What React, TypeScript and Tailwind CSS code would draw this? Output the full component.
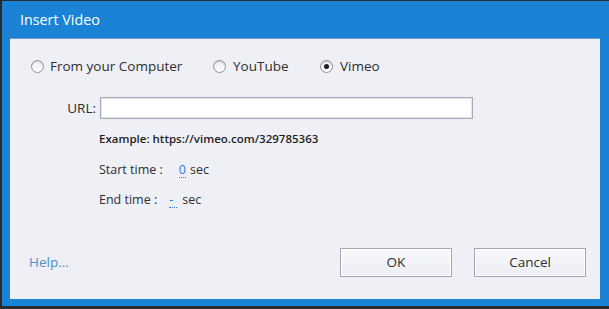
import React from "react";

function Radio({ checked }: { checked?: boolean }) {
  return (
    <span className="relative flex h-[13px] w-[13px] shrink-0 items-center justify-center rounded-full border border-[#8e9096] bg-gradient-to-b from-[#e9eaee] to-white shadow-[inset_0_1px_1px_rgba(0,0,0,0.12)]">
      {checked && <span className="h-[5px] w-[5px] rounded-full bg-[#1e1e1e]" />}
    </span>
  );
}

export default function App() {
  const font = { fontFamily: '"Open Sans", "Noto Sans", "Liberation Sans", sans-serif' };
  return (
    <div
      className="flex h-[309px] w-[609px] flex-col border-l-2 border-t border-b-[3px] border-[#2b2b2b] bg-[#1a83d6]"
      style={font}
    >
      <div className="flex h-[37px] shrink-0 items-center pl-[18px] text-[14.3px] text-white">Insert Video</div>
      <div className="ml-[8px] mr-[9px] flex h-[261px] flex-col border-t border-[#6f9cc8] bg-[#eff0f6] text-[13px] text-[#2e2e2e]">
        <div className="mt-[18px] flex h-[18px] items-center pl-[21px] text-[13.5px]">
          <label className="flex w-[182px] items-center gap-[6px]">
            <Radio />
            <span>From your Computer</span>
          </label>
          <label className="flex w-[107px] items-center gap-[7px]">
            <Radio />
            <span>YouTube</span>
          </label>
          <label className="flex items-center gap-[7px]">
            <Radio checked />
            <span>Vimeo</span>
          </label>
        </div>
        <div className="mt-[22px] flex h-[22px] items-center">
          <span className="w-[90px] pr-[4px] text-right text-[13.5px]">URL:</span>
          <div className="h-[22px] w-[373px] border border-[#a6a9b6] bg-white shadow-[inset_0_0_0_1px_#e4e6ee]" />
        </div>
        <div className="mt-[12px] flex h-[16px] items-center pl-[89px] text-[11.5px] font-semibold text-[#1f1f1f]">
          Example: https://vimeo.com/329785363
        </div>
        <div className="mt-[14px] flex h-[18px] items-center pl-[89px] text-[12.5px]">
          <span>Start time :</span>
          <span className="ml-[16px] border-b border-dotted border-[#2f7bd8] leading-[14px] text-[#2f7bd8]">0</span>
          <span className="ml-[4px]">sec</span>
        </div>
        <div className="mt-[12px] flex h-[18px] items-center pl-[89px] text-[12.5px]">
          <span>End time :</span>
          <span className="ml-[12px] w-[8px] border-b border-dotted border-[#2f7bd8] leading-[14px] text-[#2f7bd8]">-</span>
          <span className="ml-[5px]">sec</span>
        </div>
        <div className="mt-[39px] flex h-[29px] items-center pl-[19px] pr-[14px]">
          <span className="text-[13.5px] text-[#4b8fd3]">Help...</span>
          <div className="ml-auto flex gap-[22px]">
            <button className="h-[29px] w-[112px] border border-[#a3a6b3] bg-gradient-to-b from-[#f9f9fc] to-[#eceef3] text-[13.5px] text-[#2e2e2e] shadow-[inset_0_0_0_1px_#ffffff]">
              OK
            </button>
            <button className="h-[29px] w-[112px] border border-[#a3a6b3] bg-gradient-to-b from-[#f9f9fc] to-[#eceef3] text-[13.5px] text-[#2e2e2e] shadow-[inset_0_0_0_1px_#ffffff]">
              Cancel
            </button>
          </div>
        </div>
      </div>
    </div>
  );
}
